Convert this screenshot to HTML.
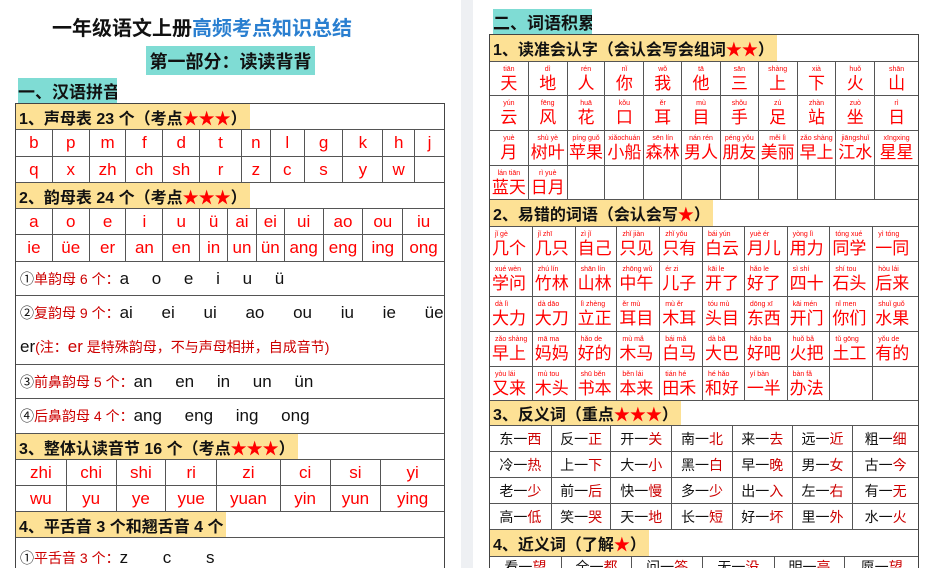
<!DOCTYPE html>
<html><head><meta charset="utf-8"><style>
*{margin:0;padding:0;box-sizing:border-box}
html,body{width:934px;height:568px;overflow:hidden}
body{background:#eef0f3;font-family:"Liberation Sans","Noto Sans CJK SC",sans-serif;position:relative}
.pg{position:absolute;top:0;height:568px;background:#fff}
.a{position:absolute;white-space:nowrap}
.t{position:absolute;width:430px;border:1.5px solid #444;border-bottom:none;background:#fff}
.row{display:flex;border-bottom:1.5px solid #555;width:100%}
.row>div{border-left:1.5px solid #555;display:flex;align-items:center;justify-content:center;color:#f00;font-size:17px;overflow:hidden;white-space:nowrap}
.row>div:first-child{border-left:none}
.h{display:flex;align-items:center;border-bottom:1.5px solid #555}
.h span{background:#fde195;height:100%;display:flex;align-items:center;padding-left:3px;padding-right:3px;font-weight:bold;font-size:16px;color:#111;white-space:nowrap}
.s{color:#f00}
.teal{background:#7fdcd4;font-weight:bold;color:#111;display:flex;align-items:center}
.d{justify-content:flex-start!important;padding-left:4px;font-size:14px!important}
.d .k{color:#111;font-size:17px}
.d .r{color:#c00}
.c{flex-direction:column;justify-content:center!important}
.c i{font-style:normal;font-size:7px;line-height:9px;color:#f00}
.c b{font-weight:normal;font-size:17px;line-height:19px;color:#f00}
.w{flex-direction:column;align-items:flex-start!important;padding-left:2px}
.w i{font-style:normal;font-size:7px;line-height:9px;color:#f00;padding-left:3px}
.w b{font-weight:normal;font-size:17px;line-height:19px;color:#f00}
.an>div{font-size:14px;color:#111}
.an em{font-style:normal;color:#c00}
</style></head><body>
<div class="pg" style="left:0;width:461px"></div>
<div class="pg" style="left:473px;width:461px"></div>

<div class="a" style="left:52px;top:12px;font-size:20px;font-weight:bold;color:#111">一年级语文上册<span style="color:#2a7fd0">高频考点知识总结</span></div>
<div class="a teal" style="left:146px;top:46px;width:169px;height:29px;font-size:18px;justify-content:center">第一部分：读读背背</div>
<div class="a teal" style="left:18px;top:78px;width:99px;height:25px;font-size:17px;overflow:hidden">一、汉语拼音</div>

<div class="t" style="left:15px;top:103px">
<div class="h" style="height:26px"><span>1、声母表 23 个（考点<b class="s">★★★</b>）</span></div>
<div class="row" style="height:27px"><div style="width:36px">b</div><div style="width:37px">p</div><div style="width:37px">m</div><div style="width:37px">f</div><div style="width:37px">d</div><div style="width:42px">t</div><div style="width:29px">n</div><div style="width:34px">l</div><div style="width:39px">g</div><div style="width:40px">k</div><div style="width:32px">h</div><div style="width:30px">j</div></div>
<div class="row" style="height:26px"><div style="width:36px">q</div><div style="width:37px">x</div><div style="width:37px">zh</div><div style="width:37px">ch</div><div style="width:37px">sh</div><div style="width:42px">r</div><div style="width:29px">z</div><div style="width:34px">c</div><div style="width:39px">s</div><div style="width:40px">y</div><div style="width:32px">w</div><div style="width:30px"></div></div>
<div class="h" style="height:26px"><span>2、韵母表 24 个（考点<b class="s">★★★</b>）</span></div>
<div class="row" style="height:26px"><div style="width:36px">a</div><div style="width:37px">o</div><div style="width:37px">e</div><div style="width:37px">i</div><div style="width:37px">u</div><div style="width:28px">ü</div><div style="width:29px">ai</div><div style="width:28px">ei</div><div style="width:39px">ui</div><div style="width:40px">ao</div><div style="width:40px">ou</div><div style="width:42px">iu</div></div>
<div class="row" style="height:27px"><div style="width:36px">ie</div><div style="width:37px">üe</div><div style="width:37px">er</div><div style="width:37px">an</div><div style="width:37px">en</div><div style="width:28px">in</div><div style="width:29px">un</div><div style="width:28px">ün</div><div style="width:39px">ang</div><div style="width:40px">eng</div><div style="width:40px">ing</div><div style="width:42px">ong</div></div>
<div class="row" style="height:34px"><div class="d" style="width:100%"><span style="color:#111">①</span><span class="r">单韵母 6 个：</span><span class="k" style="word-spacing:18px">a o e i u ü</span></div></div>
<div class="row" style="height:69px"><div class="d" style="width:100%;flex-direction:column;align-items:flex-start;justify-content:space-around!important"><div><span style="color:#111">②</span><span class="r">复韵母 9 个：</span><span class="k" style="word-spacing:24px">ai ei ui ao ou iu ie üe</span></div><div><span class="k">er</span><span class="r">(注：<span style="font-size:17px;color:#c00">er</span> 是特殊韵母，不与声母相拼，自成音节)</span></div></div></div>
<div class="row" style="height:34px"><div class="d" style="width:100%"><span style="color:#111">③</span><span class="r">前鼻韵母 5 个：</span><span class="k" style="word-spacing:18px">an en in un ün</span></div></div>
<div class="row" style="height:35px"><div class="d" style="width:100%"><span style="color:#111">④</span><span class="r">后鼻韵母 4 个：</span><span class="k" style="word-spacing:18px">ang eng ing ong</span></div></div>
<div class="h" style="height:26px"><span>3、整体认读音节 16 个（考点<b class="s">★★★</b>）</span></div>
<div class="row" style="height:26px"><div style="width:50px">zhi</div><div style="width:50px">chi</div><div style="width:50px">shi</div><div style="width:51px">ri</div><div style="width:64px">zi</div><div style="width:50px">ci</div><div style="width:51px">si</div><div style="width:64px">yi</div></div>
<div class="row" style="height:26px"><div style="width:50px">wu</div><div style="width:50px">yu</div><div style="width:50px">ye</div><div style="width:51px">yue</div><div style="width:64px">yuan</div><div style="width:50px">yin</div><div style="width:51px">yun</div><div style="width:64px">ying</div></div>
<div class="h" style="height:26px"><span>4、平舌音 3 个和翘舌音 4 个</span></div>
<div class="row" style="height:40px;border-bottom:none"><div class="d" style="width:100%"><span style="color:#111">①</span><span class="r">平舌音 3 个：</span><span class="k" style="word-spacing:30px">z c s</span></div></div>
</div>

<div class="a teal" style="left:493px;top:9px;width:99px;height:25px;font-size:17px;overflow:hidden">二、词语积累</div>

<div class="t" style="left:489px;top:34px">
<div class="h" style="height:27px"><span>1、读准会认字（会认会写会组词<b class="s">★★</b>）</span></div>
<div class="row" style="height:34px"><div class="c" style="width:38px"><i>tiān</i><b>天</b></div><div class="c" style="width:39px"><i>dì</i><b>地</b></div><div class="c" style="width:38px"><i>rén</i><b>人</b></div><div class="c" style="width:39px"><i>nǐ</i><b>你</b></div><div class="c" style="width:38px"><i>wǒ</i><b>我</b></div><div class="c" style="width:39px"><i>tā</i><b>他</b></div><div class="c" style="width:38px"><i>sān</i><b>三</b></div><div class="c" style="width:39px"><i>shàng</i><b>上</b></div><div class="c" style="width:39px"><i>xià</i><b>下</b></div><div class="c" style="width:39px"><i>huǒ</i><b>火</b></div><div class="c" style="width:44px"><i>shān</i><b>山</b></div></div>
<div class="row" style="height:35px"><div class="c" style="width:38px"><i>yún</i><b>云</b></div><div class="c" style="width:39px"><i>fēng</i><b>风</b></div><div class="c" style="width:38px"><i>huā</i><b>花</b></div><div class="c" style="width:39px"><i>kǒu</i><b>口</b></div><div class="c" style="width:38px"><i>ěr</i><b>耳</b></div><div class="c" style="width:39px"><i>mù</i><b>目</b></div><div class="c" style="width:38px"><i>shǒu</i><b>手</b></div><div class="c" style="width:39px"><i>zú</i><b>足</b></div><div class="c" style="width:39px"><i>zhàn</i><b>站</b></div><div class="c" style="width:39px"><i>zuò</i><b>坐</b></div><div class="c" style="width:44px"><i>rì</i><b>日</b></div></div>
<div class="row" style="height:35px"><div class="c" style="width:38px"><i>yuè</i><b>月</b></div><div class="c" style="width:39px"><i>shù yè</i><b>树叶</b></div><div class="c" style="width:38px"><i>píng guǒ</i><b>苹果</b></div><div class="c" style="width:39px"><i>xiǎochuán</i><b>小船</b></div><div class="c" style="width:38px"><i>sēn lín</i><b>森林</b></div><div class="c" style="width:39px"><i>nán rén</i><b>男人</b></div><div class="c" style="width:38px"><i>péng yǒu</i><b>朋友</b></div><div class="c" style="width:39px"><i>měi lì</i><b>美丽</b></div><div class="c" style="width:39px"><i>zǎo shàng</i><b>早上</b></div><div class="c" style="width:39px"><i>jiāngshuǐ</i><b>江水</b></div><div class="c" style="width:44px"><i>xīngxing</i><b>星星</b></div></div>
<div class="row" style="height:34px"><div class="c" style="width:38px"><i>lán tiān</i><b>蓝天</b></div><div class="c" style="width:39px"><i>rì yuè</i><b>日月</b></div><div style="width:38px"></div><div style="width:39px"></div><div style="width:38px"></div><div style="width:39px"></div><div style="width:38px"></div><div style="width:39px"></div><div style="width:39px"></div><div style="width:39px"></div><div style="width:44px"></div></div>
<div class="h" style="height:27px"><span>2、易错的词语（会认会写<b class="s">★</b>）</span></div>
<div class="row" style="height:35px"><div class="w" style="width:42px"><i>jǐ gè</i><b>几个</b></div><div class="w" style="width:43px"><i>jǐ zhī</i><b>几只</b></div><div class="w" style="width:42px"><i>zì jǐ</i><b>自己</b></div><div class="w" style="width:43px"><i>zhǐ jiàn</i><b>只见</b></div><div class="w" style="width:43px"><i>zhǐ yǒu</i><b>只有</b></div><div class="w" style="width:42px"><i>bái yún</i><b>白云</b></div><div class="w" style="width:43px"><i>yuè ér</i><b>月儿</b></div><div class="w" style="width:43px"><i>yòng lì</i><b>用力</b></div><div class="w" style="width:43px"><i>tóng xué</i><b>同学</b></div><div class="w" style="width:46px"><i>yì tóng</i><b>一同</b></div></div>
<div class="row" style="height:35px"><div class="w" style="width:42px"><i>xué wèn</i><b>学问</b></div><div class="w" style="width:43px"><i>zhú lín</i><b>竹林</b></div><div class="w" style="width:42px"><i>shān lín</i><b>山林</b></div><div class="w" style="width:43px"><i>zhōng wǔ</i><b>中午</b></div><div class="w" style="width:43px"><i>ér zi</i><b>儿子</b></div><div class="w" style="width:42px"><i>kāi le</i><b>开了</b></div><div class="w" style="width:43px"><i>hǎo le</i><b>好了</b></div><div class="w" style="width:43px"><i>sì shí</i><b>四十</b></div><div class="w" style="width:43px"><i>shí tou</i><b>石头</b></div><div class="w" style="width:46px"><i>hòu lái</i><b>后来</b></div></div>
<div class="row" style="height:35px"><div class="w" style="width:42px"><i>dà lì</i><b>大力</b></div><div class="w" style="width:43px"><i>dà dāo</i><b>大刀</b></div><div class="w" style="width:42px"><i>lì zhèng</i><b>立正</b></div><div class="w" style="width:43px"><i>ěr mù</i><b>耳目</b></div><div class="w" style="width:43px"><i>mù ěr</i><b>木耳</b></div><div class="w" style="width:42px"><i>tóu mù</i><b>头目</b></div><div class="w" style="width:43px"><i>dōng xī</i><b>东西</b></div><div class="w" style="width:43px"><i>kāi mén</i><b>开门</b></div><div class="w" style="width:43px"><i>nǐ men</i><b>你们</b></div><div class="w" style="width:46px"><i>shuǐ guǒ</i><b>水果</b></div></div>
<div class="row" style="height:35px"><div class="w" style="width:42px"><i>zǎo shàng</i><b>早上</b></div><div class="w" style="width:43px"><i>mā ma</i><b>妈妈</b></div><div class="w" style="width:42px"><i>hǎo de</i><b>好的</b></div><div class="w" style="width:43px"><i>mù mǎ</i><b>木马</b></div><div class="w" style="width:43px"><i>bái mǎ</i><b>白马</b></div><div class="w" style="width:42px"><i>dà bā</i><b>大巴</b></div><div class="w" style="width:43px"><i>hǎo ba</i><b>好吧</b></div><div class="w" style="width:43px"><i>huǒ bǎ</i><b>火把</b></div><div class="w" style="width:43px"><i>tǔ gōng</i><b>土工</b></div><div class="w" style="width:46px"><i>yǒu de</i><b>有的</b></div></div>
<div class="row" style="height:34px"><div class="w" style="width:42px"><i>yòu lái</i><b>又来</b></div><div class="w" style="width:43px"><i>mù tou</i><b>木头</b></div><div class="w" style="width:42px"><i>shū běn</i><b>书本</b></div><div class="w" style="width:43px"><i>běn lái</i><b>本来</b></div><div class="w" style="width:43px"><i>tián hé</i><b>田禾</b></div><div class="w" style="width:42px"><i>hé hǎo</i><b>和好</b></div><div class="w" style="width:43px"><i>yí bàn</i><b>一半</b></div><div class="w" style="width:43px"><i>bàn fǎ</i><b>办法</b></div><div style="width:43px"></div><div style="width:46px"></div></div>
<div class="h" style="height:25px"><span>3、反义词（重点<b class="s">★★★</b>）</span></div>
<div class="row an" style="height:26px"><div style="width:61px">东一<em>西</em></div><div style="width:60px">反一<em>正</em></div><div style="width:61px">开一<em>关</em></div><div style="width:61px">南一<em>北</em></div><div style="width:60px">来一<em>去</em></div><div style="width:61px">远一<em>近</em></div><div style="width:66px">粗一<em>细</em></div></div>
<div class="row an" style="height:26px"><div style="width:61px">冷一<em>热</em></div><div style="width:60px">上一<em>下</em></div><div style="width:61px">大一<em>小</em></div><div style="width:61px">黑一<em>白</em></div><div style="width:60px">早一<em>晚</em></div><div style="width:61px">男一<em>女</em></div><div style="width:66px">古一<em>今</em></div></div>
<div class="row an" style="height:26px"><div style="width:61px">老一<em>少</em></div><div style="width:60px">前一<em>后</em></div><div style="width:61px">快一<em>慢</em></div><div style="width:61px">多一<em>少</em></div><div style="width:60px">出一<em>入</em></div><div style="width:61px">左一<em>右</em></div><div style="width:66px">有一<em>无</em></div></div>
<div class="row an" style="height:26px"><div style="width:61px">高一<em>低</em></div><div style="width:60px">笑一<em>哭</em></div><div style="width:61px">天一<em>地</em></div><div style="width:61px">长一<em>短</em></div><div style="width:60px">好一<em>坏</em></div><div style="width:61px">里一<em>外</em></div><div style="width:66px">水一<em>火</em></div></div>
<div class="h" style="height:27px"><span>4、近义词（了解<b class="s">★</b>）</span></div>
<div class="row an" style="height:26px;border-bottom:none;align-items:flex-start"><div style="width:71px;align-items:flex-end;height:20px">看一<em>望</em></div><div style="width:71px;align-items:flex-end;height:20px">全一<em>都</em></div><div style="width:71px;align-items:flex-end;height:20px">问一<em>答</em></div><div style="width:72px;align-items:flex-end;height:20px">无一<em>没</em></div><div style="width:71px;align-items:flex-end;height:20px">明一<em>亮</em></div><div style="width:74px;align-items:flex-end;height:20px">愿一<em>望</em></div></div>
</div>
</body></html>
